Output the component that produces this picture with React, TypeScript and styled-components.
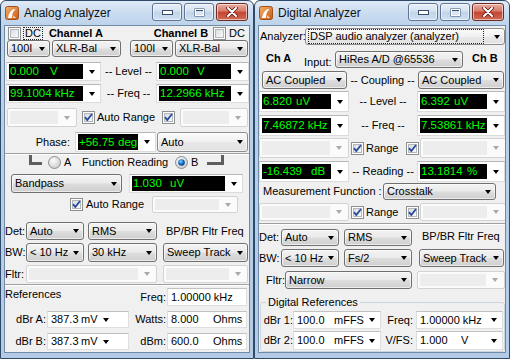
import React from "react";
import styled, { createGlobalStyle } from "styled-components";

const GlobalStyle = createGlobalStyle`
  html, body { margin: 0; padding: 0; background: #ffffff; }
  body {
    font-family: "Liberation Sans", Arial, sans-serif;
    font-size: 11px;
    color: #000;
  }
`;

const Desktop = styled.div`
  display: flex;
  width: 510px;
  height: 359px;
  overflow: hidden;
`;

/* ---------- window chrome ---------- */

const Frame = styled.section<{ $w: number }>`
  width: ${(p) => p.$w}px;
  height: 359px;
  box-sizing: border-box;
  flex-shrink: 0;
  display: flex;
  flex-direction: column;
  border: 1px solid #2f4a68;
  border-radius: 6px 6px 0 0;
  padding: 0 3px 3px;
  background: linear-gradient(180deg, #dfeaf6 0px, #cadcf0 12px, #bbd2eb 26px, #b3cbe7 100%);
`;

const TitleBar = styled.header`
  height: 24px;
  flex-shrink: 0;
  display: flex;
  align-items: flex-start;
  padding: 0 2px 0 1px;
`;

const IconBox = styled.span`
  display: flex;
  margin-top: 5px;
`;

const TitleText = styled.h1`
  margin: 0 0 0 5px;
  font: 12px/24px "Liberation Sans", Arial, sans-serif;
  color: #111;
  font-weight: normal;
`;

const Captions = styled.div`
  margin-left: auto;
  margin-top: 2px;
  display: flex;
  gap: 2px;
`;

const CaptionButton = styled.span<{ $w: number; $close?: boolean }>`
  width: ${(p) => p.$w}px;
  height: 18px;
  box-sizing: border-box;
  display: flex;
  align-items: center;
  justify-content: center;
  border: 1px solid ${(p) => (p.$close ? "#6e2a22" : "#5f7592")};
  border-radius: 3px;
  background: ${(p) =>
    p.$close
      ? "linear-gradient(180deg, #eab0a3 0%, #d77a68 45%, #c44532 50%, #cf6a55 100%)"
      : "linear-gradient(180deg, #e9f0f8 0%, #d6e2f1 45%, #c2d4ea 50%, #cfdff2 100%)"};
  box-shadow: inset 0 0 0 1px rgba(255, 255, 255, 0.55);
`;

const Client = styled.div`
  flex: 1;
  display: flex;
  flex-direction: column;
  background: #f0f0f0;
  border: 1px solid #6f8aa8;
  margin-bottom: 2px;
  overflow: hidden;
  line-height: 13px;
`;

const AppIcon = () => (
  <svg width="14" height="14" viewBox="0 0 14 14">
    <defs>
      <linearGradient id="apg" x1="0" y1="0" x2="1" y2="1">
        <stop offset="0" stopColor="#f6b26b" />
        <stop offset="1" stopColor="#c45a17" />
      </linearGradient>
    </defs>
    <rect x="0.5" y="0.5" width="13" height="13" rx="2" fill="url(#apg)" stroke="#a4501c" />
    <path d="M3 12 C3.5 8 5 5 8.5 3 L10.5 3.5 C8 5.5 6.8 8 7 12 Z" fill="#fff" />
    <path d="M7.5 9 L11 12 L8.5 12 Z" fill="#fde7d3" />
  </svg>
);

const MinGlyph = () => (
  <svg width="11" height="5" viewBox="0 0 11 5">
    <rect x="0.5" y="0.5" width="10" height="4" fill="#fff" stroke="#3c4f68" />
  </svg>
);

const MaxGlyph = () => (
  <svg width="11" height="9" viewBox="0 0 11 9">
    <rect x="0.5" y="0.5" width="10" height="8" fill="#3c4f68" />
    <rect x="2" y="3" width="7" height="4" fill="#dbe5f2" />
    <rect x="1.5" y="1.5" width="8" height="6" fill="none" stroke="#fff" />
  </svg>
);

const CloseGlyph = () => (
  <svg width="12" height="10" viewBox="0 0 12 10">
    <path d="M2 1 L10 9 M10 1 L2 9" stroke="#5a1a12" strokeWidth="3.6" strokeLinecap="round" />
    <path d="M2 1 L10 9 M10 1 L2 9" stroke="#fff" strokeWidth="2" strokeLinecap="round" />
  </svg>
);

const AppWindow = ({ title, width, children }: { title: string; width: number; children: React.ReactNode }) => (
  <Frame $w={width}>
    <TitleBar>
      <IconBox>
        <AppIcon />
      </IconBox>
      <TitleText>{title}</TitleText>
      <Captions>
        <CaptionButton $w={30}>
          <MinGlyph />
        </CaptionButton>
        <CaptionButton $w={30}>
          <MaxGlyph />
        </CaptionButton>
        <CaptionButton $w={32} $close>
          <CloseGlyph />
        </CaptionButton>
      </Captions>
    </TitleBar>
    <Client>{children}</Client>
  </Frame>
);

/* ---------- layout pieces ---------- */

type Sized = { $w?: number; $ml?: number };

const Row = styled.div<{ $h: number; $mt?: number; $pl?: number; $pr?: number }>`
  display: flex;
  align-items: center;
  flex-shrink: 0;
  height: ${(p) => p.$h}px;
  margin-top: ${(p) => p.$mt ?? 0}px;
  padding: 0 ${(p) => p.$pr ?? 0}px 0 ${(p) => p.$pl ?? 0}px;
`;

const Text = styled.span<Sized & { $align?: "left" | "right"; $top?: number }>`
  flex-shrink: 0;
  box-sizing: border-box;
  white-space: pre;
  width: ${(p) => (p.$w ? `${p.$w}px` : "auto")};
  margin-left: ${(p) => p.$ml ?? 0}px;
  text-align: ${(p) => p.$align ?? "left"};
  ${(p) => (p.$top !== undefined ? `align-self: flex-start; margin-top: ${p.$top}px;` : "")}
`;

const Caption = styled.span`
  flex: 1;
  text-align: center;
  white-space: pre;
`;

const Heading = styled(Text)`
  font-weight: bold;
`;

const Spacer = styled.span`
  flex: 1;
`;

const FocusText = styled.span<{ $ml?: number }>`
  margin-left: ${(p) => p.$ml ?? 0}px;
  border: 1px dotted #222;
  padding: 0 1px;
  line-height: 11px;
`;

const Separator = styled.div<{ $mt?: number }>`
  flex-shrink: 0;
  margin-top: ${(p) => p.$mt ?? 0}px;
  border-top: 1px solid #a0a0a0;
  border-bottom: 1px solid #ffffff;
`;

/* ---------- combo boxes ---------- */

const SelectBox = styled.div<Sized & { $light?: boolean }>`
  width: ${(p) => p.$w}px;
  margin-left: ${(p) => p.$ml ?? 0}px;
  height: 100%;
  box-sizing: border-box;
  flex-shrink: 0;
  display: flex;
  align-items: center;
  padding: 0 0 0 2px;
  border: 1px solid ${(p) => (p.$light ? "#8c8c8c" : "#707070")};
  border-radius: 3px;
  background: ${(p) =>
    p.$light
      ? "linear-gradient(180deg, #fafafa 0%, #f1f1f1 50%, #e8e8e8 51%, #e2e2e2 100%)"
      : "linear-gradient(180deg, #f3f3f3 0%, #ebebeb 48%, #dddddd 52%, #cfcfcf 100%)"};
  box-shadow: inset 0 0 0 1px rgba(255, 255, 255, 0.6);
`;

const SelectValue = styled.span<{ $focus?: boolean }>`
  flex: 1;
  white-space: pre;
  overflow: hidden;
  ${(p) => (p.$focus ? "border: 1px dotted #222; margin: 1px 6px 1px 0; padding-left: 1px;" : "padding-left: 1px;")}
`;

const ArrowSlot = styled.span<{ $w?: number }>`
  width: ${(p) => p.$w ?? 14}px;
  flex-shrink: 0;
  display: flex;
  align-items: center;
  justify-content: center;
`;

const Arrow = styled.span<{ $muted?: boolean }>`
  width: 0;
  height: 0;
  border-left: 3.5px solid transparent;
  border-right: 3.5px solid transparent;
  border-top: 4px solid ${(p) => (p.$muted ? "#a9a9a9" : "#000")};
`;

const Select = ({ w, ml, focus, light, children }: { w: number; ml?: number; focus?: boolean; light?: boolean; children: React.ReactNode }) => (
  <SelectBox $w={w} $ml={ml} $light={light}>
    <SelectValue $focus={focus}>{children}</SelectValue>
    <ArrowSlot>
      <Arrow />
    </ArrowSlot>
  </SelectBox>
);

const DisabledBox = styled.div<Sized>`
  width: ${(p) => p.$w}px;
  margin-left: ${(p) => p.$ml ?? 0}px;
  height: 100%;
  box-sizing: border-box;
  flex-shrink: 0;
  display: flex;
  align-items: stretch;
  padding: 2px 0 2px 2px;
  border: 1px solid #d3d3d3;
  border-radius: 2px;
  background: #fbfbfb;
`;

const DisabledFill = styled.span`
  flex: 1;
  background: #ededed;
`;

const Disabled = ({ w, ml }: { w: number; ml?: number }) => (
  <DisabledBox $w={w} $ml={ml}>
    <DisabledFill />
    <ArrowSlot $w={18}>
      <Arrow $muted />
    </ArrowSlot>
  </DisabledBox>
);

/* ---------- meter displays ---------- */

const DisplayBox = styled.div<Sized & { $pad?: number }>`
  width: ${(p) => p.$w}px;
  margin-left: ${(p) => p.$ml ?? 0}px;
  height: 100%;
  box-sizing: border-box;
  flex-shrink: 0;
  display: flex;
  align-items: stretch;
  padding: ${(p) => p.$pad ?? 1}px 0 ${(p) => p.$pad ?? 1}px 2px;
  background: #ffffff;
  border: 1px solid #dcdcdc;
  border-top-color: #b5b7bb;
`;

const Screen = styled.div`
  flex: 1;
  display: flex;
  align-items: center;
  padding-left: 1px;
  background: #000;
  color: #00ff00;
  white-space: pre;
  overflow: hidden;
  font-size: 11.5px;
`;

const Num = styled.span<{ $w: number }>`
  display: inline-block;
  width: ${(p) => p.$w}px;
  flex-shrink: 0;
`;

const Display = ({ w, ml, pad, value, unit, numW }: { w: number; ml?: number; pad?: number; value: string; unit?: string; numW?: number }) => (
  <DisplayBox $w={w} $ml={ml} $pad={pad}>
    <Screen>
      {numW ? <Num $w={numW}>{value}</Num> : value}
      {unit}
    </Screen>
    <ArrowSlot $w={17}>
      <Arrow />
    </ArrowSlot>
  </DisplayBox>
);

/* ---------- edit fields ---------- */

const Field = styled.div<Sized>`
  width: ${(p) => p.$w}px;
  margin-left: ${(p) => p.$ml ?? 0}px;
  height: 100%;
  box-sizing: border-box;
  flex-shrink: 0;
  display: flex;
  align-items: center;
  padding-left: 3px;
  background: #ffffff;
  border: 1px solid #dedede;
  border-top-color: #c2c2c2;
  white-space: pre;
`;

const FieldValue = styled.span<{ $w?: number }>`
  display: flex;
  ${(p) => (p.$w ? `width: ${p.$w}px; flex-shrink: 0;` : "flex: 1;")}
`;

/* ---------- check boxes and radios ---------- */

const Tick = styled.span<{ $ml?: number }>`
  display: flex;
  flex-shrink: 0;
  margin-left: ${(p) => p.$ml ?? 0}px;
`;

const Check = ({ on, ml }: { on?: boolean; ml?: number }) => (
  <Tick $ml={ml}>
    <svg width="13" height="13" viewBox="0 0 13 13">
      <defs>
        <linearGradient id="cbw" x1="0" y1="0" x2="1" y2="1">
          <stop offset="0" stopColor="#d9dce0" />
          <stop offset="1" stopColor="#fbfbfb" />
        </linearGradient>
      </defs>
      <rect x="0.5" y="0.5" width="12" height="12" fill="#fdfdfd" stroke="#8e8f8f" />
      <rect x="2.5" y="2.5" width="8" height="8" fill="url(#cbw)" stroke="#b3b8be" />
      {on && <path d="M3 6.2 L5.3 9 L10 3" fill="none" stroke="#2b4d9c" strokeWidth="1.9" />}
    </svg>
  </Tick>
);

const Radio = ({ on, ml }: { on?: boolean; ml?: number }) => (
  <Tick $ml={ml}>
    <svg width="13" height="13" viewBox="0 0 13 13">
      <defs>
        <radialGradient id="rbw" cx="0.4" cy="0.35" r="0.7">
          <stop offset="0" stopColor="#fdfdfd" />
          <stop offset="1" stopColor="#c9c9c9" />
        </radialGradient>
        <radialGradient id="rbd" cx="0.4" cy="0.35" r="0.7">
          <stop offset="0" stopColor="#8fd6ff" />
          <stop offset="0.55" stopColor="#0d6bc4" />
          <stop offset="1" stopColor="#083e7c" />
        </radialGradient>
      </defs>
      <circle cx="6.5" cy="6.5" r="6" fill="url(#rbw)" stroke="#8e8f8f" />
      {on && <circle cx="6.5" cy="6.5" r="3.3" fill="url(#rbd)" />}
    </svg>
  </Tick>
);

const Bracket = styled.span<{ $side: "left" | "right"; $w: number; $ml?: number }>`
  align-self: flex-start;
  flex-shrink: 0;
  box-sizing: border-box;
  width: ${(p) => p.$w}px;
  height: 10px;
  margin-left: ${(p) => p.$ml ?? 0}px;
  border-bottom: 3px solid #5e5e5e;
  border-${(p) => p.$side}: 3px solid #5e5e5e;
`;

const Group = styled.fieldset`
  flex: 1;
  min-width: 0;
  display: flex;
  flex-direction: column;
  margin: 7px 0 0 1px;
  padding: 0;
  border: 1px solid #cdd5dc;
  border-radius: 3px;
`;

const GroupTitle = styled.legend`
  margin-left: 5px;
  padding: 0 2px;
  line-height: 13px;
  font-size: 11px;
`;

/* ---------- windows ---------- */

const AnalogAnalyzer = () => (
  <AppWindow title="Analog Analyzer" width={254}>
    <Row $h={13} $mt={1} $pl={3} $pr={4}>
      <Check />
      <FocusText $ml={2}>DC</FocusText>
      <Heading $ml={6}>Channel A</Heading>
      <Spacer />
      <Heading>Channel B</Heading>
      <Check ml={5} />
      <Text $ml={3}>DC</Text>
    </Row>
    <Row $h={17} $pl={2}>
      <Select w={43}>100I</Select>
      <Select w={69} ml={2}>XLR-Bal</Select>
      <Select w={43} ml={9}>100I</Select>
      <Select w={73} ml={2}>XLR-Bal</Select>
    </Row>
    <Row $h={19} $mt={5} $pl={1}>
      <Display w={95} value="0.000" numW={40} unit="V" />
      <Caption>-- Level --</Caption>
      <Display w={93} value="0.000" numW={37} unit="V" />
    </Row>
    <Row $h={19} $mt={3} $pl={1}>
      <Display w={95} value="99.1004 kHz" />
      <Caption>-- Freq --</Caption>
      <Display w={93} value="12.2966 kHz" />
    </Row>
    <Row $h={19} $mt={5} $pl={2}>
      <Disabled w={70} />
      <Check on ml={5} />
      <Text $ml={2} $w={65}>Auto Range</Text>
      <Check on />
      <Disabled w={68} ml={5} />
    </Row>
    <Row $h={20} $mt={5}>
      <Text $w={65} $align="right">Phase:</Text>
      <Display w={81} ml={5} value="+56.75" numW={39} unit="deg" />
      <Select w={91} ml={1} light>Auto</Select>
    </Row>
    <Separator $mt={1} />
    <Row $h={15}>
      <Bracket $side="left" $w={13} $ml={24} />
      <Radio ml={6} />
      <Text $ml={3} $w={18}>A</Text>
      <Text $w={93}>Function Reading</Text>
      <Radio on />
      <Text $ml={3} $w={16}>B</Text>
      <Bracket $side="right" $w={17} />
    </Row>
    <Row $h={19} $mt={4} $pl={6}>
      <Select w={111}>Bandpass</Select>
      <Display w={114} ml={7} value="1.030" numW={37} unit="uV" />
    </Row>
    <Row $h={17} $mt={3}>
      <Check on ml={65} />
      <Text $ml={3} $w={66}>Auto Range</Text>
      <Disabled w={86} />
    </Row>
    <Row $h={18} $mt={9}>
      <Text $w={21}>Det:</Text>
      <Select w={58}>Auto</Select>
      <Select w={69} ml={4}>RMS</Select>
      <Text $ml={9}>BP/BR Fltr Freq</Text>
    </Row>
    <Row $h={19} $mt={3}>
      <Text $w={21}>BW:</Text>
      <Select w={58}>{"< 10 Hz"}</Select>
      <Select w={69} ml={4}>30 kHz</Select>
      <Select w={85} ml={6}>Sweep Track</Select>
    </Row>
    <Row $h={18} $mt={3}>
      <Text $w={21}>Fltr:</Text>
      <Disabled w={131} />
      <Disabled w={85} ml={6} />
    </Row>
    <Separator $mt={1} />
    <Row $h={18} $mt={2}>
      <Text $w={126} $top={0}>References</Text>
      <Text $w={35} $align="right">Freq:</Text>
      <Field $w={80} $ml={1}>1.00000 kHz</Field>
    </Row>
    <Row $h={17} $mt={5}>
      <Text $w={41} $align="right">dBr A:</Text>
      <Field $w={82} $ml={1}>
        <FieldValue $w={50}>
          <Num $w={30}>387.3</Num>mV
        </FieldValue>
        <ArrowSlot $w={9}>
          <Arrow />
        </ArrowSlot>
      </Field>
      <Text $w={37} $align="right">Watts:</Text>
      <Field $w={80} $ml={1}>
        <Num $w={42}>8.000</Num>Ohms
      </Field>
    </Row>
    <Row $h={17} $mt={5}>
      <Text $w={41} $align="right">dBr B:</Text>
      <Field $w={82} $ml={1}>
        <FieldValue $w={50}>
          <Num $w={30}>387.3</Num>mV
        </FieldValue>
        <ArrowSlot $w={9}>
          <Arrow />
        </ArrowSlot>
      </Field>
      <Text $w={37} $align="right">dBm:</Text>
      <Field $w={80} $ml={1}>
        <Num $w={42}>600.0</Num>Ohms
      </Field>
    </Row>
  </AppWindow>
);

const DigitalAnalyzer = () => (
  <AppWindow title="Digital Analyzer" width={256}>
    <Row $h={17} $mt={2} $pl={1}>
      <Text $w={45}>Analyzer:</Text>
      <Select w={200} focus light>DSP audio analyzer (analyzer)</Select>
    </Row>
    <Row $h={17} $mt={6}>
      <Heading $w={38} $ml={7} $top={1}>Ch A</Heading>
      <Text $w={31} $top={5}>Input:</Text>
      <Select w={128}>HiRes A/D @65536</Select>
      <Heading $ml={9} $top={1}>Ch B</Heading>
    </Row>
    <Row $h={18} $mt={3} $pl={3} $pr={1}>
      <Select w={85}>AC Coupled</Select>
      <Caption>-- Coupling --</Caption>
      <Select w={86}>AC Coupled</Select>
    </Row>
    <Row $h={21} $mt={2}>
      <Display w={90} pad={2} value="6.820" numW={33} unit="uV" />
      <Caption>-- Level --</Caption>
      <Display w={88} pad={2} value="6.392" numW={33} unit="uV" />
    </Row>
    <Row $h={21} $mt={3}>
      <Display w={90} pad={2} value="7.46872 kHz" />
      <Caption>-- Freq --</Caption>
      <Display w={88} pad={2} value="7.53861 kHz" />
    </Row>
    <Row $h={20} $mt={2}>
      <Disabled w={90} />
      <Check on ml={2} />
      <Text $ml={2} $w={40}>Range</Text>
      <Check on />
      <Disabled w={86} ml={1} />
    </Row>
    <Row $h={21} $mt={3}>
      <Display w={90} pad={2} value="-16.439" numW={48} unit="dB" />
      <Caption>-- Reading --</Caption>
      <Display w={88} pad={2} value="13.1814" numW={46} unit="%" />
    </Row>
    <Row $h={17} $mt={1}>
      <Text $ml={4} $w={120}>Measurement Function :</Text>
      <Select w={113}>Crosstalk</Select>
    </Row>
    <Row $h={18} $mt={3}>
      <Disabled w={90} />
      <Check on ml={2} />
      <Text $ml={2} $w={40}>Range</Text>
      <Check on />
      <Disabled w={86} ml={1} />
    </Row>
    <Separator $mt={2} />
    <Row $h={17} $mt={4}>
      <Text $w={22}>Det:</Text>
      <Select w={58}>Auto</Select>
      <Select w={68} ml={5}>RMS</Select>
      <Text $ml={10} $top={1}>BP/BR Fltr Freq</Text>
    </Row>
    <Row $h={18} $mt={3}>
      <Text $w={22}>BW:</Text>
      <Select w={58}>{"< 10 Hz"}</Select>
      <Select w={68} ml={5}>Fs/2</Select>
      <Select w={85} ml={7}>Sweep Track</Select>
    </Row>
    <Row $h={18} $mt={4}>
      <Text $w={26} $align="right">Fltr:</Text>
      <Select w={127}>Narrow</Select>
      <Disabled w={88} ml={5} />
    </Row>
    <Group>
      <GroupTitle>Digital References</GroupTitle>
      <Row $h={18} $mt={2}>
        <Text $w={32} $align="right">dBr 1:</Text>
        <Field $w={88}>
          <FieldValue>
            <Num $w={37}>100.0</Num>mFFS
          </FieldValue>
          <ArrowSlot $w={16}>
            <Arrow />
          </ArrowSlot>
        </Field>
        <Text $w={35} $align="right">Freq: </Text>
        <Field $w={87}>
          <FieldValue>1.00000 kHz</FieldValue>
          <ArrowSlot $w={16}>
            <Arrow />
          </ArrowSlot>
        </Field>
      </Row>
      <Row $h={19} $mt={2}>
        <Text $w={32} $align="right">dBr 2:</Text>
        <Field $w={88}>
          <FieldValue>
            <Num $w={37}>100.0</Num>mFFS
          </FieldValue>
          <ArrowSlot $w={16}>
            <Arrow />
          </ArrowSlot>
        </Field>
        <Text $w={35} $align="right">V/FS: </Text>
        <Field $w={87}>
          <FieldValue>
            <Num $w={41}>1.000</Num>V
          </FieldValue>
          <ArrowSlot $w={16}>
            <Arrow />
          </ArrowSlot>
        </Field>
      </Row>
    </Group>
  </AppWindow>
);

export default function App() {
  return (
    <>
      <GlobalStyle />
      <Desktop>
        <AnalogAnalyzer />
        <DigitalAnalyzer />
      </Desktop>
    </>
  );
}
